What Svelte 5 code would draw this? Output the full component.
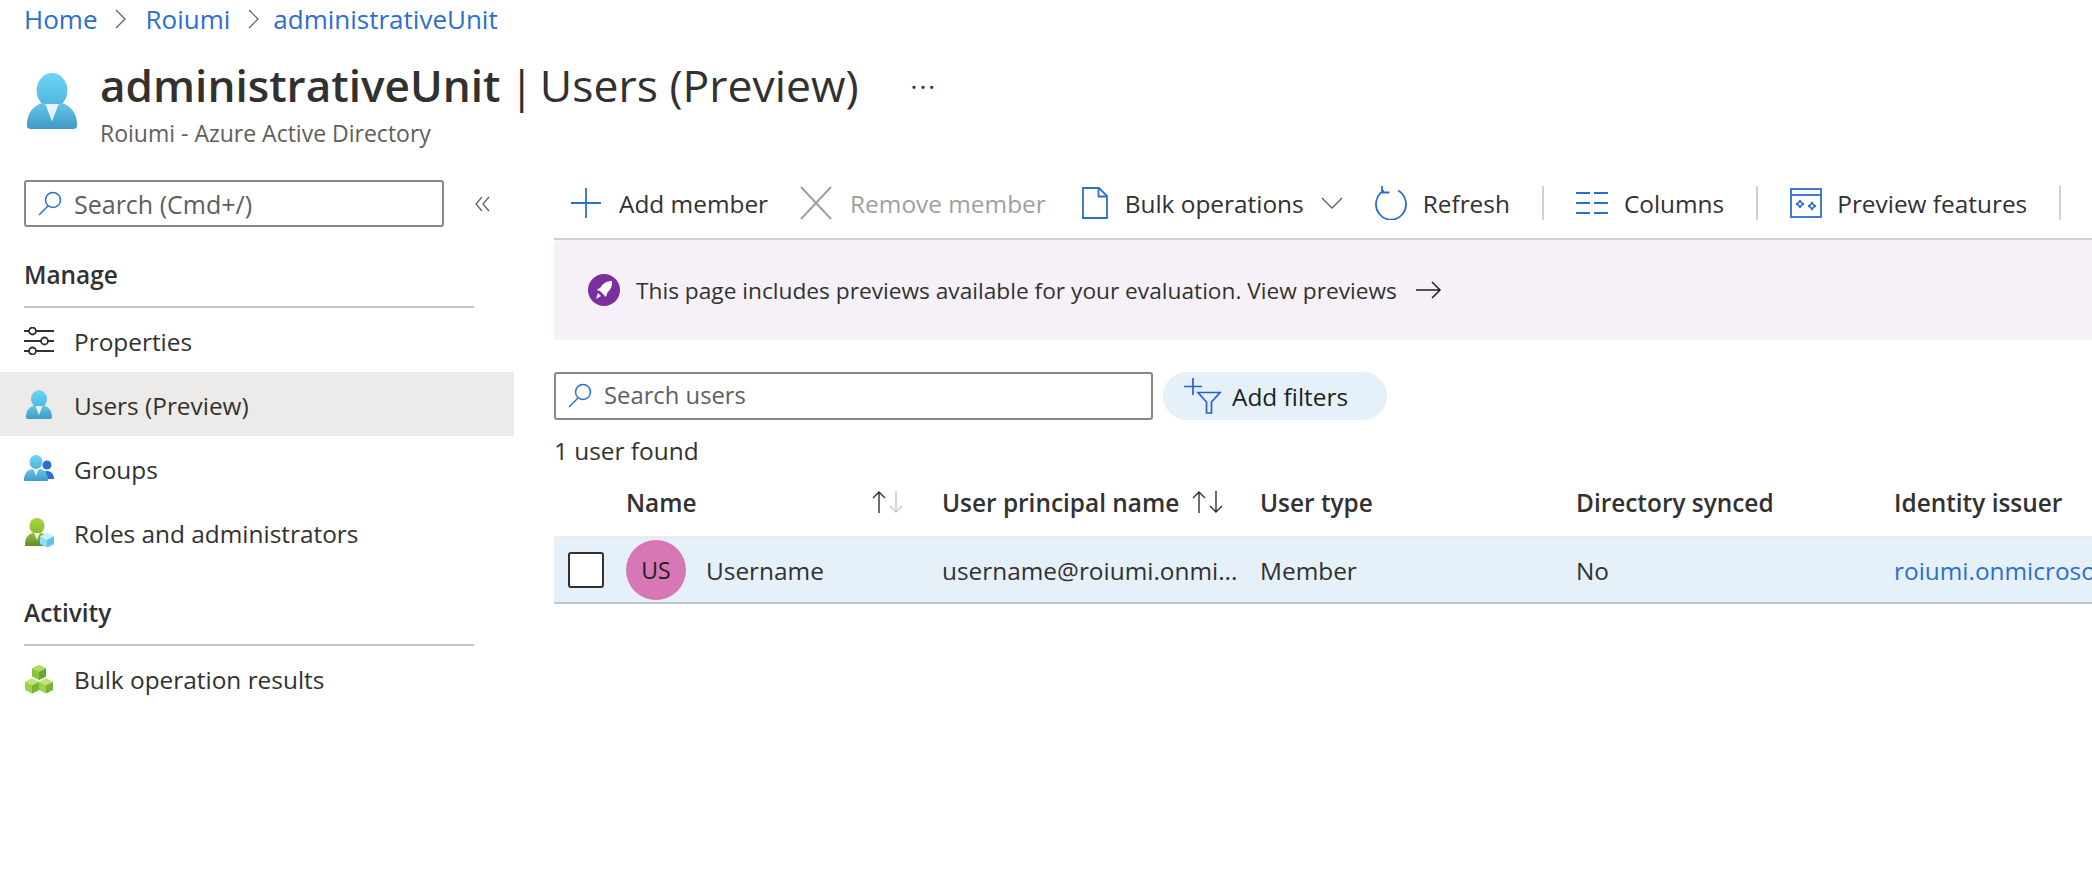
<script>
  // Blade page: Users (Preview) of an administrative unit
  const crumbs = ['Home', 'Roiumi', 'administrativeUnit'];
  const columns = [
    { label: 'Name', width: 316, sort: 'name' },
    { label: 'User principal name', width: 318, sort: 'upn' },
    { label: 'User type', width: 316 },
    { label: 'Directory synced', width: 318 },
    { label: 'Identity issuer', width: 300 }
  ];
</script>

<svg class="defs" width="0" height="0" aria-hidden="true">
  <defs>
    <linearGradient id="skin" x1="0" y1="0" x2="0" y2="1"><stop offset="0" stop-color="#6fd6f5" /><stop offset="1" stop-color="#4fb3dc" /></linearGradient>
    <linearGradient id="body" x1="0" y1="0" x2="0" y2="1"><stop offset="0" stop-color="#66c6e8" /><stop offset="1" stop-color="#3f99c6" /></linearGradient>
    <linearGradient id="greenskin" x1="0" y1="0" x2="0" y2="1"><stop offset="0" stop-color="#a6d63f" /><stop offset="1" stop-color="#86b92e" /></linearGradient>
    <linearGradient id="greenbody" x1="0" y1="0" x2="0" y2="1"><stop offset="0" stop-color="#8fbe3a" /><stop offset="1" stop-color="#5f8f28" /></linearGradient>
    <symbol id="person" viewBox="0 0 28 30">
      <ellipse cx="14" cy="9" rx="8" ry="9" fill="url(#skin)" />
      <path d="M1 27c0-6 3-10 8-11.5l5 2 5-2c5 1.500 8 5.500 8 11.500 0 1.200-.6 2-2 2H3c-1.400 0-2-.8-2-2z" fill="url(#body)" />
      <path d="M10.500 16h7L14 25z" fill="#fff" opacity=".85" />
    </symbol>
  </defs>
</svg>

<div class="page">
  <nav class="crumbs">
    {#each crumbs as c, i}
      {#if i > 0}
        <svg class="sep" width="14" height="24" viewBox="0 0 14 24"><path d="M2 3l9 9-9 9" fill="none" stroke="#605e5c" stroke-width="1.200" /></svg>
      {/if}
      <a href="#top">{c}</a>
    {/each}
  </nav>

  <header class="head">
    <svg class="head-icon" width="54" height="58"><use href="#person" /></svg>
    <div class="head-text">
      <h1><b>administrativeUnit</b><span class="bar">|</span>Users (Preview)</h1>
      <p>Roiumi - Azure Active Directory</p>
    </div>
    <span class="more">...</span>
  </header>

  <div class="layout">
    <aside class="side">
      <div class="side-search">
        <div class="search">
          <svg width="28" height="28" viewBox="0 0 28 28"><circle cx="17" cy="10" r="7.500" fill="none" stroke="#2b6fce" stroke-width="1.500" /><path d="M12 16L3 25" stroke="#2b6fce" stroke-width="1.500" /></svg>
          <span>Search (Cmd+/)</span>
        </div>
        <svg class="collapse" width="18" height="18" viewBox="0 0 18 18"><path d="M8 2L2 9l6 7M15 2L9 9l6 7" fill="none" stroke="#605e5c" stroke-width="1.200" /></svg>
      </div>

      <h2>Manage</h2>
      <ul>
        <li>
          <svg width="30" height="28" viewBox="0 0 30 28" fill="none" stroke="#323130" stroke-width="1.800">
            <path d="M0 4h5M12 4h18M0 14h17M24 14h6M0 24h5M12 24h18" /><circle cx="8.500" cy="4" r="3.500" /><circle cx="20.500" cy="14" r="3.500" /><circle cx="8.500" cy="24" r="3.500" />
          </svg>
          Properties
        </li>
        <li class="active"><svg width="30" height="30"><use href="#person" /></svg>Users (Preview)</li>
        <li>
          <svg width="30" height="28" viewBox="0 0 30 28">
            <circle cx="23" cy="10" r="4.500" fill="#2b6fce" /><path d="M17 24c0-5 2-8 6-8s7 3 7 8z" fill="#2b6fce" />
            <ellipse cx="12" cy="7" rx="6.500" ry="7" fill="url(#skin)" /><path d="M0 25c0-6 3-10 8-11l4 2 4-2c5 1 8 5 8 11 0 .8-.5 1-1 1H1c-.5 0-1-.2-1-1z" fill="url(#body)" /><path d="M9.500 14.500h5L12 21z" fill="#fff" opacity=".85" />
          </svg>
          Groups
        </li>
        <li>
          <svg width="30" height="30" viewBox="0 0 30 30">
            <ellipse cx="13" cy="8" rx="7.500" ry="8" fill="url(#greenskin)" /><path d="M1 27c0-7 3-11 8-12l4 2 4-2c5 1 8 5 8 12 0 .8-.5 1-1 1H2c-.5 0-1-.2-1-1z" fill="url(#greenbody)" /><path d="M10 15h6l-3 7z" fill="#fff" opacity=".85" />
            <path d="M23 15l7 3.500v7.500l-7 3.500-7-3.500v-7.500z" fill="#8fdcf4" /><path d="M23 15l7 3.500-7 3.500-7-3.500z" fill="#c9f0fb" /><path d="M23 22l7-3.500v7.500l-7 3.500z" fill="#5cc3ea" />
          </svg>
          Roles and administrators
        </li>
      </ul>

      <h2 class="activity">Activity</h2>
      <ul>
        <li>
          <svg width="30" height="30" viewBox="0 0 30 30">
            <g><path d="M15 1l7 3.500v8l-7 3.500-7-3.500v-8z" fill="#86c440" /><path d="M15 1l7 3.500-7 3.500-7-3.500z" fill="#a9de5c" /><path d="M15 8l7-3.500v8L15 16z" fill="#6aa82f" /></g>
            <g transform="translate(-7 13.500)"><path d="M15 1l7 3.500v8l-7 3.500-7-3.500v-8z" fill="#9ad24e" /><path d="M15 1l7 3.500-7 3.500-7-3.500z" fill="#bde870" /><path d="M15 8l7-3.500v8L15 16z" fill="#76b536" /></g>
            <g transform="translate(7 13.500)"><path d="M15 1l7 3.500v8l-7 3.500-7-3.500v-8z" fill="#9ad24e" /><path d="M15 1l7 3.500-7 3.500-7-3.500z" fill="#bde870" /><path d="M15 8l7-3.500v8L15 16z" fill="#76b536" /></g>
          </svg>
          Bulk operation results
        </li>
      </ul>
    </aside>

    <main class="main">
      <div class="toolbar">
        <button class="tool add">
          <svg width="32" height="32" viewBox="0 0 32 32"><path d="M16 1v30M1 16h30" stroke="#2b6fce" stroke-width="1.800" /></svg>
          Add member
        </button>
        <button class="tool remove disabled">
          <svg width="34" height="34" viewBox="0 0 34 34"><path d="M2 1l30 32M32 1L2 33" stroke="#a19f9d" stroke-width="2" /></svg>
          Remove member
        </button>
        <button class="tool bulk">
          <svg width="26" height="32" viewBox="0 0 26 32" fill="none" stroke="#2b6fce" stroke-width="1.800"><path d="M1 1h16l8 8v22H1zM16.500 1v8.500H25" /></svg>
          Bulk operations
          <svg class="chev" width="22" height="12" viewBox="0 0 22 12"><path d="M1 1l10 10L21 1" fill="none" stroke="#605e5c" stroke-width="1.300" /></svg>
        </button>
        <button class="tool refresh">
          <svg width="34" height="34" viewBox="0 0 34 34" fill="none" stroke="#2b6fce" stroke-width="1.800"><path d="M10 4.500A15 15.500 0 1 0 24 4.500" /><path d="M8 0v6.500h7.500" /></svg>
          Refresh
        </button>
        <i class="divider"></i>
        <button class="tool columns">
          <svg width="32" height="24" viewBox="0 0 32 24" stroke="#2b6fce" stroke-width="2"><path d="M0 2h14M18 2h14M0 12h14M18 12h14M0 22h14M18 22h14" /></svg>
          Columns
        </button>
        <i class="divider"></i>
        <button class="tool preview">
          <svg width="32" height="30" viewBox="0 0 32 30" fill="none" stroke="#2b6fce" stroke-width="1.800">
            <rect x="1" y="1" width="30" height="28" /><path d="M1 7h30" />
            <path d="M10 12c.5 2.500 1.500 3.500 4 4-2.500.5-3.500 1.500-4 4-.5-2.500-1.500-3.500-4-4 2.500-.5 3.500-1.500 4-4zM22 14c.5 2.500 1.500 3.500 4 4-2.500.5-3.500 1.500-4 4-.5-2.500-1.500-3.500-4-4 2.500-.5 3.500-1.500 4-4z" stroke-width="1.400" />
          </svg>
          Preview features
        </button>
        <i class="divider"></i>
      </div>

      <div class="banner">
        <svg width="32" height="32" viewBox="0 0 32 32">
          <circle cx="16" cy="16" r="16" fill="#7a2e9f" />
          <path d="M24 7c.6 4.500-1 8.500-4.500 11.500L18 23l-3-3-3-3-3.500-1 4-2.500C15 9 19.500 7 24 7z" fill="#fff" />
          <path d="M10 19l3 3-5 3z" fill="#fff" />
        </svg>
        <span>This page includes previews available for your evaluation. View previews</span>
        <svg class="arrow" width="26" height="18" viewBox="0 0 26 18"><path d="M0 9h24M16 1l8 8-8 8" fill="none" stroke="#201f1e" stroke-width="1.500" /></svg>
      </div>

      <div class="filters">
        <div class="search users">
          <svg width="28" height="28" viewBox="0 0 28 28"><circle cx="17" cy="10" r="7.500" fill="none" stroke="#2b6fce" stroke-width="1.500" /><path d="M12 16L3 25" stroke="#2b6fce" stroke-width="1.500" /></svg>
          <span>Search users</span>
        </div>
        <button class="pill">
          <svg width="40" height="36" viewBox="0 0 40 36" fill="none" stroke="#2b5fd0" stroke-width="1.700">
            <path d="M10 0v17M1 8.500h18" /><path d="M15 14.500h22l-8.500 9.500v11h-5v-11z" />
          </svg>
          Add filters
        </button>
      </div>

      <p class="count">1 user found</p>

      <div class="thead">
        <span class="check-col"></span>
        {#each columns as col}
          <div class="th" style="width: {col.width}px">
            <span>{col.label}</span>
            {#if col.sort}
              <svg class="sort {col.sort}" width="34" height="24" viewBox="0 0 34 24" fill="none" stroke-width="1.400">
                <path d="M8 23V2M2 8l6-6 6 6" stroke="#323130" />
                <path d="M25 1v21M19 16l6 6 6-6" stroke={col.sort === 'name' ? '#c8c6c4' : '#323130'} />
              </svg>
            {/if}
          </div>
        {/each}
      </div>

      <div class="row">
        <span class="check-col"><span class="check"></span></span>
        <div class="td name" style="width: 316px"><span class="avatar">US</span>Username</div>
        <div class="td" style="width: 318px"><span class="clip">username@roiumi.onmi...</span></div>
        <div class="td" style="width: 316px">Member</div>
        <div class="td" style="width: 318px">No</div>
        <div class="td link" style="width: 300px">roiumi.onmicrosoft.com</div>
      </div>
    </main>
  </div>
</div>

<style>
  :global(body) {
    margin: 0;
    background: #fff;
    overflow: hidden;
  }
  .defs {
    position: absolute;
  }
  .page {
    width: 2092px;
    height: 872px;
    overflow: hidden;
    font-family: "Open Sans", "Noto Sans", sans-serif;
    font-size: 24.4px;
    color: #323130;
  }
  .crumbs {
    display: flex;
    align-items: center;
    gap: 17px;
    height: 38px;
    padding-left: 24px;
    font-size: 26px;
  }
  .crumbs a {
    color: #2b6fce;
    text-decoration: none;
  }
  .crumbs a:last-child {
    margin-left: -5px;
  }
  .head {
    display: flex;
    align-items: flex-start;
    height: 133px;
    padding: 23px 0 0 25px;
    box-sizing: border-box;
  }
  .head-icon {
    margin-top: 12px;
    margin-right: 21px;
  }
  .head-text h1 {
    margin: 0;
    font-size: 44.5px;
    line-height: 48px;
    font-weight: 400;
    white-space: nowrap;
  }
  .head-text b {
    font-size: 44.1px;
    font-weight: 600;
  }
  .bar {
    margin: 0 6px 0 9px;
  }
  .head-text p {
    margin: 9px 0 0;
    font-size: 23px;
    line-height: 30px;
    color: #605e5c;
  }
  .more {
    margin: 0 0 0 52px;
    font-size: 26px;
    letter-spacing: 2px;
  }
  .layout {
    display: flex;
  }
  .side {
    width: 514px;
    flex: none;
    padding-top: 9px;
  }
  .side-search {
    display: flex;
    align-items: center;
    padding-left: 24px;
    gap: 30px;
  }
  .search {
    display: flex;
    align-items: center;
    gap: 10px;
    box-sizing: border-box;
    width: 420px;
    height: 47px;
    padding-left: 10px;
    border: 2px solid #8a8886;
    border-radius: 3px;
    color: #605e5c;
  }
  .side-search .search span {
    font-size: 25px;
  }
  .side h2 {
    margin: 31px 40px 0 24px;
    padding-bottom: 14px;
    border-bottom: 2px solid #c8c6c4;
    font-size: 24.4px;
    line-height: 34px;
    font-weight: 600;
  }
  .side h2.activity {
    margin-top: 32px;
  }
  .side ul {
    list-style: none;
    margin: 0;
    padding: 0;
  }
  .side li {
    display: flex;
    align-items: center;
    gap: 20px;
    height: 64px;
    box-sizing: border-box;
    padding: 2px 0 0 24px;
  }
  .side li.active {
    background: #edebe9;
  }
  .main {
    flex: none;
    width: 1538px;
    margin-left: 40px;
    margin-top: -1px;
  }
  .toolbar {
    display: flex;
    align-items: center;
    height: 66px;
    padding: 0 0 2px 16px;
    border-bottom: 2px solid #d2d0ce;
  }
  .tool {
    flex: none;
    display: flex;
    align-items: center;
    gap: 17px;
    padding: 0;
    border: 0;
    background: none;
    font: inherit;
    color: #323130;
    white-space: nowrap;
  }
  .tool.disabled {
    color: #a19f9d;
  }
  .tool.remove { margin-left: 31px; }
  .tool.bulk { margin-left: 36px; }
  .tool.refresh { margin-left: 31px; gap: 15px; }
  .tool.columns { margin-left: 32px; gap: 16px; }
  .tool.preview { margin-left: 32px; gap: 15px; }
  .divider {
    flex: none;
    width: 2px;
    height: 34px;
    margin-left: 32px;
    background: #d2d0ce;
  }
  .banner {
    display: flex;
    align-items: center;
    height: 100px;
    padding-left: 34px;
    background: #f6f1f9;
    border-radius: 3px 0 0 3px;
    gap: 16px;
    font-size: 22.7px;
  }
  .arrow {
    margin-left: 3px;
  }
  .filters {
    display: flex;
    gap: 10px;
    margin-top: 32px;
  }
  .search.users {
    width: 599px;
    height: 48px;
    font-size: 23.8px;
  }
  .search.users span {
    margin-top: -2px;
  }
  .pill {
    display: flex;
    align-items: center;
    gap: 9px;
    width: 224px;
    height: 48px;
    padding: 0 0 0 20px;
    box-sizing: border-box;
    border: 0;
    border-radius: 24px;
    background: #e5f0f9;
    font: inherit;
    color: #201f1e;
  }
  .count {
    margin: 14px 0 0;
    line-height: 34px;
  }
  .thead {
    display: flex;
    align-items: center;
    height: 70px;
    border-bottom: 2px solid #edebe9;
    box-sizing: border-box;
  }
  .check-col {
    flex: none;
    display: flex;
    align-items: center;
    width: 72px;
    padding-left: 14px;
    box-sizing: border-box;
  }
  .th {
    flex: none;
    display: flex;
    align-items: center;
    font-weight: 600;
    white-space: nowrap;
  }
  .sort {
    flex: none;
    margin-left: 12px;
  }
  .sort.name {
    margin-left: 174px;
  }
  .row {
    display: flex;
    align-items: center;
    height: 66px;
    background: #e5f0f9;
    border-bottom: 2px solid #c8c6c4;
    box-sizing: border-box;
  }
  .check {
    display: block;
    width: 36px;
    height: 36px;
    box-sizing: border-box;
    border: 2px solid #323130;
    border-radius: 3px;
    background: #fff;
  }
  .td {
    flex: none;
    white-space: nowrap;
    box-sizing: border-box;
  }
  .td.name {
    display: flex;
    align-items: center;
    gap: 20px;
  }
  .avatar {
    display: flex;
    align-items: center;
    justify-content: center;
    width: 60px;
    height: 60px;
    border-radius: 50%;
    background: #d777b5;
    color: #201f1e;
    font-size: 23px;
  }
  .link {
    color: #2b6fce;
  }
</style>
